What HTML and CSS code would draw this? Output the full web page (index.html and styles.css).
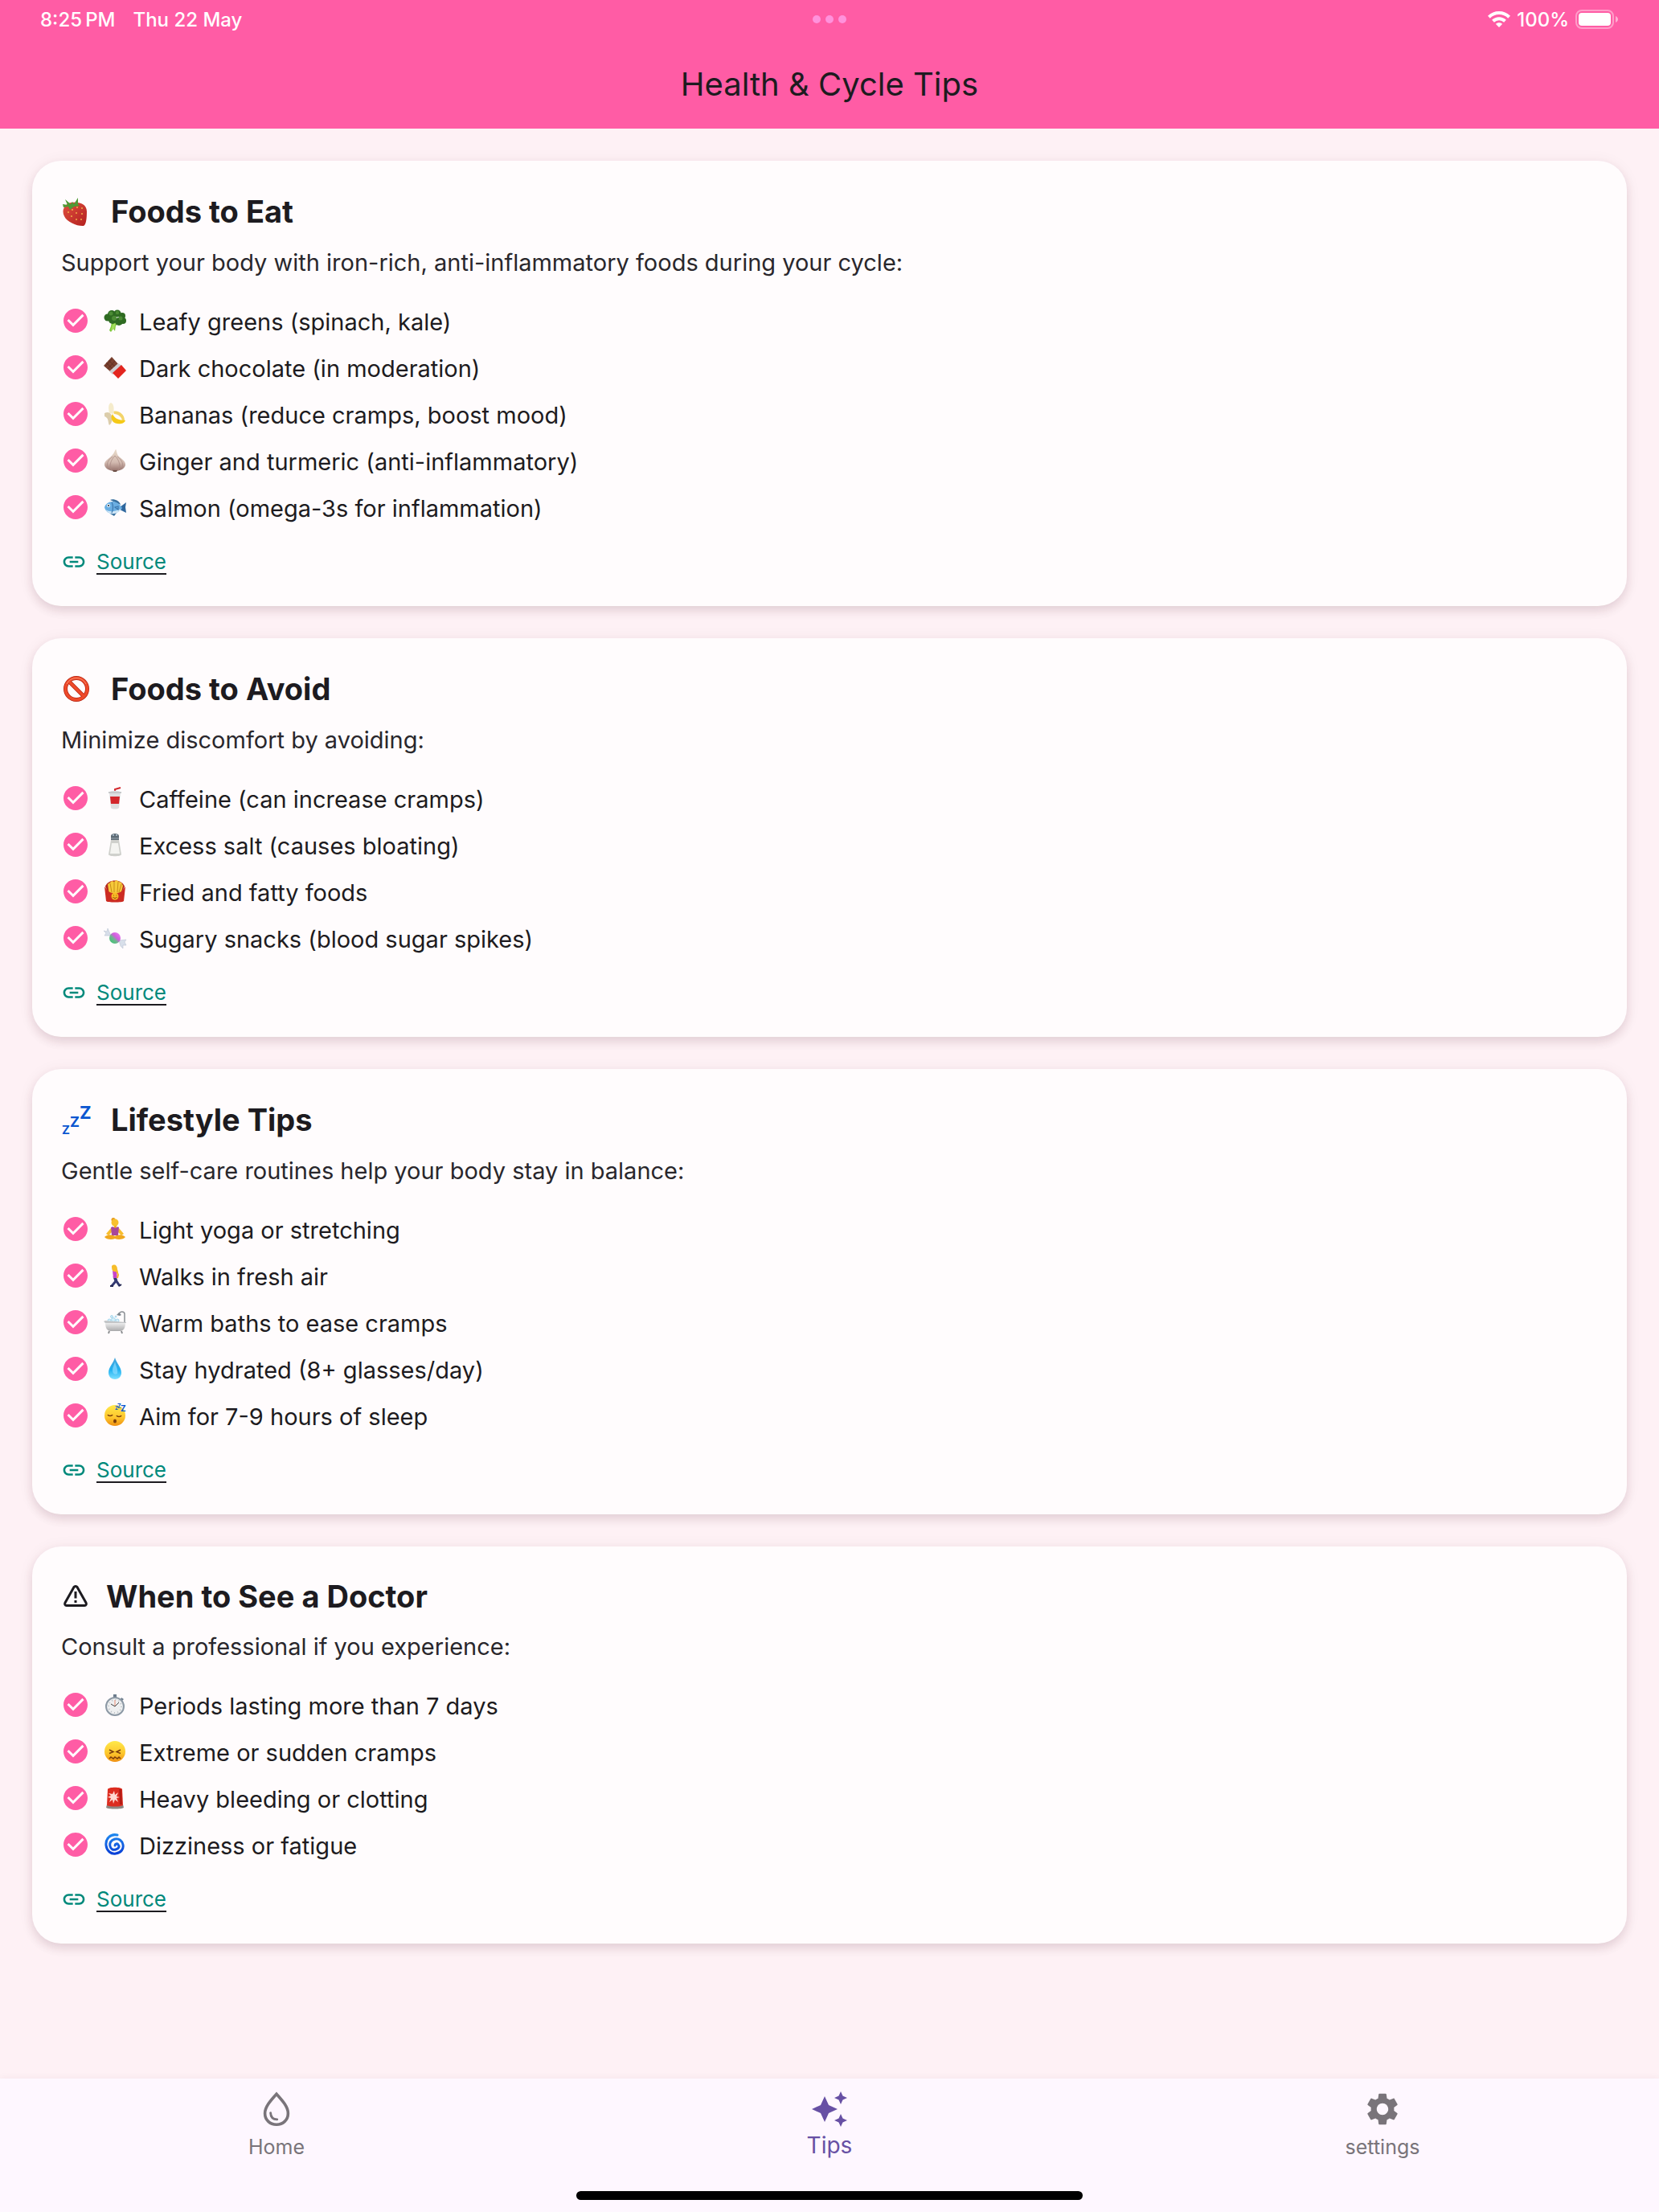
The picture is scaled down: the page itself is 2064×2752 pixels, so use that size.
FILE: index.html
```html
<!DOCTYPE html>
<html lang="en">
<head>
<meta charset="utf-8">
<meta name="viewport" content="width=device-width, initial-scale=1">
<title>Health &amp; Cycle Tips</title>
<link rel="stylesheet" href="styles.css">
</head>
<body>
<svg class="sprite" aria-hidden="true">
  <defs>
    <linearGradient id="drop-fill" x1="0" y1="0" x2="0" y2="1"><stop offset="0" stop-color="#4aa3d8"/><stop offset=".55" stop-color="#1fb0f0"/><stop offset="1" stop-color="#7fe0ff"/></linearGradient>
    <linearGradient id="face-fill" x1="0" y1="0" x2="0" y2="1"><stop offset="0" stop-color="#ffe94a"/><stop offset=".6" stop-color="#fdc52c"/><stop offset="1" stop-color="#ef8f12"/></linearGradient>
    <linearGradient id="garlic-fill" x1="0" y1="0" x2="0" y2="1"><stop offset="0" stop-color="#e9dccb"/><stop offset=".6" stop-color="#d3bab0"/><stop offset="1" stop-color="#94706a"/></linearGradient>
    <linearGradient id="berry-fill" x1="0" y1="0" x2="1" y2="1"><stop offset="0" stop-color="#e0503f"/><stop offset="1" stop-color="#b3201f"/></linearGradient>
    <linearGradient id="candy-fill" x1="0" y1="1" x2="1" y2="0"><stop offset="0" stop-color="#2fc96b"/><stop offset=".4" stop-color="#6fb58f"/><stop offset=".6" stop-color="#d45be0"/><stop offset="1" stop-color="#e98bef"/></linearGradient>
    <linearGradient id="swirl-fill" x1="0" y1="0" x2="0" y2="1"><stop offset="0" stop-color="#1e86ee"/><stop offset="1" stop-color="#0a3fd6"/></linearGradient>
    <linearGradient id="tub-fill" x1="0" y1="0" x2="0" y2="1"><stop offset="0" stop-color="#f3f3f3"/><stop offset="1" stop-color="#a9a9ab"/></linearGradient>
  </defs>
  <symbol id="check" viewBox="0 0 24 24"><path d="M12 2C6.480 2 2 6.480 2 12s4.480 10 10 10 10-4.480 10-10S17.520 2 12 2zm-2 15l-5-5 1.410-1.410L10 14.170l7.590-7.590L19 8l-9 9z"/></symbol>
  <symbol id="link" viewBox="0 0 24 24"><path d="M3.900 12c0-1.710 1.390-3.100 3.100-3.100h4V7H7c-2.760 0-5 2.240-5 5s2.240 5 5 5h4v-1.900H7c-1.710 0-3.100-1.390-3.100-3.100zM8 13h8v-2H8v2zm9-6h-4v1.900h4c1.710 0 3.100 1.390 3.100 3.100s-1.390 3.100-3.100 3.100h-4V17h4c2.760 0 5-2.240 5-5s-2.240-5-5-5z"/></symbol>
</svg>

<header class="app-bar">
  <div class="status">
    <div class="status-left"><span>8:25&#8201;PM</span><span>Thu 22 May</span></div>
    <div class="dots"><i></i><i></i><i></i></div>
    <div class="status-right">
      <svg class="wifi" viewBox="0 0 28 20" aria-hidden="true"><g fill="none" stroke="#fff" stroke-width="4"><path d="M1.400 7.200C8.500.3 19.500.3 26.600 7.200"/><path d="M6.500 12.300C10.800 8.200 17.200 8.200 21.500 12.300"/></g><path fill="#fff" d="M14 20l-4.200-4.200c2.300-2.100 6.100-2.100 8.400 0z"/></svg>
      <span>100%</span>
      <svg class="battery" viewBox="0 0 54 24" aria-hidden="true"><rect x="1" y="1" width="46" height="22" rx="7" fill="none" stroke="#fff" stroke-opacity=".4" stroke-width="2"/><rect x="4" y="4" width="40" height="16" rx="4" fill="#fff"/><path d="M50 8c4 1.500 4 6.500 0 8z" fill="#fff" fill-opacity=".5"/></svg>
    </div>
  </div>
  <h1>Health &amp; Cycle Tips</h1>
</header>

<main>
  <section class="card">
    <h2>
      <svg class="title-emoji" viewBox="0 0 38 38" aria-hidden="true"><path d="M4 13C7 7 13 6 19 7c7 0 13 4 13 11 0 9-1 17-4 18-7 1-21-5-24-12-2-4-2-8 0-11z" fill="url(#berry-fill)"/><path d="M2 9l6 1-3-7 7 6 2-3 2 3 5-8 0 8 2 2-7 1-5 4-2-4-6 1z" fill="#4f9a35"/><g fill="#f0b04a"><circle cx="9" cy="19" r="1"/><circle cx="14" cy="16" r="1"/><circle cx="20" cy="13" r="1"/><circle cx="26" cy="14" r="1"/><circle cx="13" cy="24" r="1"/><circle cx="19" cy="20" r="1"/><circle cx="26" cy="21" r="1"/><circle cx="19" cy="28" r="1"/><circle cx="25" cy="28" r="1"/></g></svg>
      <span>Foods to Eat</span>
    </h2>
    <p>Support your body with iron-rich, anti-inflammatory foods during your cycle:</p>
    <ul>
      <li><svg class="check"><use href="#check"/></svg><svg class="emoji" viewBox="0 0 30 30"><path d="M11 17l4-2 7 3-6 3-1 7-2-3-3 4-2-2 2-5z" fill="#7ec83a"/><path d="M12 20l4-3-2 8-4 2z" fill="#a4e05c"/><g fill="#2f6b22"><circle cx="6" cy="11" r="4.500"/><circle cx="11" cy="7" r="5"/><circle cx="18" cy="6" r="4.500"/><circle cx="24" cy="9" r="4"/><circle cx="25" cy="15" r="4"/><circle cx="20" cy="16" r="5"/><circle cx="12" cy="14" r="5"/></g><g fill="#4c8c35"><circle cx="10" cy="6" r="2.500"/><circle cx="18" cy="5" r="2.200"/><circle cx="14" cy="12" r="3"/><circle cx="22" cy="12" r="2.500"/></g></svg><span>Leafy greens (spinach, kale)</span></li>
      <li><svg class="check"><use href="#check"/></svg><svg class="emoji" viewBox="0 0 30 30"><path d="M11 2l9 10-10 9L1 13z" fill="#7b4130"/><path d="M7 6l9 9M4 9l9 9M6 17l9-10M3 14l8-9" stroke="#5a2d20" stroke-width=".8" fill="none"/><path d="M19 10l5 3-12 11-4-4z" fill="#cfcfd2"/><path d="M23 12l6 7-10 10-7-7z" fill="#e3251f"/></svg><span>Dark chocolate (in moderation)</span></li>
      <li><svg class="check"><use href="#check"/></svg><svg class="emoji" viewBox="0 0 30 30"><path d="M13 12c7-2 14 4 14 11l-3 1c0-5-5-9-10-9z" fill="#f3d469"/><path d="M8 14c-1-5-2-11 2-13 4 2 4 7 3 14z" fill="#f5ebcb"/><path d="M2 14c4-2 7-1 9 3 1 5 0 10-3 12-2-3 0-9-6-11z" fill="#dccdab"/><path d="M12 15c2 5 7 8 16 8-1 5-12 6-16 1-2-3-2-6 0-9z" fill="#f5c917"/></svg><span>Bananas (reduce cramps, boost mood)</span></li>
      <li><svg class="check"><use href="#check"/></svg><svg class="emoji" viewBox="0 0 30 30"><path d="M16 1c1 0 1 5 3 8 4 4 9 6 9 11 0 5-7 8-13 8S2 25 2 20c0-5 5-7 9-11 3-3 4-7 5-8z" fill="url(#garlic-fill)"/><path d="M15 9c-5 5-8 13-4 18M15 9c5 5 8 13 4 18M12 10C5 15 4 21 7 25M18 10c7 5 8 11 5 15" fill="none" stroke="#ab8d86" stroke-width=".8"/><path d="M12 27h6l-1 2h-4z" fill="#6d4f46"/></svg><span>Ginger and turmeric (anti-inflammatory)</span></li>
      <li><svg class="check"><use href="#check"/></svg><svg class="emoji" viewBox="0 0 30 30"><path d="M21 15l8-6-1 6 1 7-8-4z" fill="#2f679e"/><path d="M9 6c4-2 12 1 13 6zM9 23l5 3 3-4z" fill="#376f9e"/><path d="M2 15C4 8 16 3 24 16 17 26 4 25 2 15z" fill="#6aaee2"/><path d="M3 18c4 6 14 8 20-1-8 3-13 5-20 1z" fill="#cfe5f5"/><path d="M11 9c2 3 2 9 0 13M15 15l4-1v4z" fill="none" stroke="#3d78ae" stroke-width="1.200"/><circle cx="7" cy="13" r="2" fill="#fff"/><circle cx="7" cy="13" r="1" fill="#123"/></svg><span>Salmon (omega-3s for inflammation)</span></li>
    </ul>
    <div class="source"><svg><use href="#link"/></svg><a href="#eat">Source</a></div>
  </section>

  <section class="card">
    <h2>
      <svg class="title-emoji" viewBox="0 0 38 38" aria-hidden="true"><g fill="none" stroke="#b52312" stroke-width="5"><circle cx="19" cy="18" r="13.500"/><path d="M9.500 8.500l19 19"/></g><g fill="none" stroke="#ee4a2a" stroke-width="3.500"><circle cx="19" cy="18" r="13.500"/><path d="M9.500 8.500l19 19"/></g><path d="M7 12a13.500 13.500 0 0 1 24 0" fill="none" stroke="#f98a6a"/></svg>
      <span>Foods to Avoid</span>
    </h2>
    <p>Minimize discomfort by avoiding:</p>
    <ul>
      <li><svg class="check"><use href="#check"/></svg><svg class="emoji" viewBox="0 0 30 30"><path d="M15 8V4l7-2" fill="none" stroke="#d3262b" stroke-width="2"/><path d="M8 8c0-3 14-3 14 0l-2 19c-1 2-9 2-10 0z" fill="#dededf"/><path d="M9 13h12l-1 9H10z" fill="#d3262b"/><path d="M7 7h16v2H7z" fill="#c6c8ca"/></svg><span>Caffeine (can increase cramps)</span></li>
      <li><svg class="check"><use href="#check"/></svg><svg class="emoji" viewBox="0 0 30 30"><path d="M10 9h10l3 18c0 3-16 3-16 0z" fill="#cfd0cc"/><path d="M11 13h8l2 13H9z" fill="#f4f4f1"/><path d="M10 4c0-4 10-4 10 0v5H10z" fill="#5e6b75"/><path d="M10 7h10" stroke="#99a5ae"/><circle cx="13" cy="3" r="1" fill="#b9c8d8"/><circle cx="17" cy="3" r="1" fill="#b9c8d8"/></svg><span>Excess salt (causes bloating)</span></li>
      <li><svg class="check"><use href="#check"/></svg><svg class="emoji" viewBox="0 0 30 30"><path d="M3 9C6-1 24-1 27 9l-4 8H7z" fill="#b3261e"/><path d="M6 6l3-2 2-2 3 1 3-2 3 2 3 1 2 4-3 12H8z" fill="#f6c93a"/><path d="M9 5l2 11M14 3v13M19 3l-1 13M23 6l-3 10" stroke="#c98d1a" fill="none"/><path d="M2 9l5 6c4 3 12 3 16 0l5-6-2 18c-1 2-21 2-22 0z" fill="#cc2b22"/><circle cx="15" cy="21" r="4.500" fill="#f7b924"/><path d="M13 20h.8M16.500 20h.8M12.500 22c1 2 4 2 5 0" stroke="#8a3c10" fill="none"/></svg><span>Fried and fatty foods</span></li>
      <li><svg class="check"><use href="#check"/></svg><svg class="emoji" viewBox="0 0 30 30"><g fill="#d8dfea" stroke="#bcc5d4" stroke-width=".6"><path d="M10 12L6 3 5 7 1 6l3 3-2 3 4 0z"/><path d="M20 18l9-1-2 3 2 4-4 0 0 4-3-3z"/></g><circle cx="15" cy="15" r="7" fill="url(#candy-fill)"/></svg><span>Sugary snacks (blood sugar spikes)</span></li>
    </ul>
    <div class="source"><svg><use href="#link"/></svg><a href="#avoid">Source</a></div>
  </section>

  <section class="card">
    <h2>
      <svg class="title-emoji zzz" viewBox="0 0 38 38" aria-hidden="true"><text x="1" y="36" font-size="15">Z</text><text x="11" y="27" font-size="18">Z</text><text x="23" y="17" font-size="22">Z</text></svg>
      <span>Lifestyle Tips</span>
    </h2>
    <p>Gentle self-care routines help your body stay in balance:</p>
    <ul>
      <li><svg class="check"><use href="#check"/></svg><svg class="emoji" viewBox="0 0 30 30"><circle cx="13" cy="3.500" r="2.500" fill="#e79a1c"/><circle cx="15" cy="7" r="4.500" fill="#f8c12e"/><path d="M14 11h3v4h-3z" fill="#f0b020"/><path d="M10 14L4 21l3 2 5-5zM20 14l6 7-3 2-5-5z" fill="#f8bd2d"/><path d="M10 13l3-1c1 2 4 2 5 0l2 1-1 10h-8z" fill="#a8479a"/><path d="M2 25c4-4 9-3 13-1 4-2 9-3 13 1-2 3-9 4-13 2-4 2-11 1-13-2z" fill="#f0a81f"/></svg><span>Light yoga or stretching</span></li>
      <li><svg class="check"><use href="#check"/></svg><svg class="emoji" viewBox="0 0 30 30"><path d="M14 16l2 6-5 6M15 16l2 6 4 6" fill="none" stroke="#343a72" stroke-width="3"/><path d="M9 28h4M20 28l3-2" stroke="#252853" stroke-width="2"/><path d="M12 9l5 1 1 8h-5z" fill="#c745c9"/><path d="M17 9l2 5-1 4" fill="none" stroke="#f4b72b" stroke-width="2"/><path d="M11 3c3-3 7-1 7 4l1 4-4-1c-3 0-4-2-4-7z" fill="#f6bd2a"/></svg><span>Walks in fresh air</span></li>
      <li><svg class="check"><use href="#check"/></svg><svg class="emoji" viewBox="0 0 30 30"><path d="M27 15V5c0-4-6-4-7 0" fill="none" stroke="#8b9095" stroke-width="1.500"/><path d="M17 6l3-3 3 3-2 1z" fill="#7c858d"/><g fill="#d5effa" stroke="#8ecbe6" stroke-width=".7"><circle cx="8" cy="13" r="2"/><circle cx="13" cy="12" r="2.500"/><circle cx="18" cy="13" r="2"/><circle cx="11" cy="8" r="1.500"/><circle cx="16" cy="8" r="1"/></g><path d="M3 15h25c0 7-2 11-7 11H10c-5 0-7-4-7-11z" fill="url(#tub-fill)"/><path d="M1 14l2-1 26 2v1H3z" fill="#c3c5c7"/><path d="M8 26l-1 3M23 26l1 3" stroke="#8b8d90" stroke-width="2"/></svg><span>Warm baths to ease cramps</span></li>
      <li><svg class="check"><use href="#check"/></svg><svg class="emoji" viewBox="0 0 30 30"><path d="M15 1c2 7 8 12 8 19 0 5-4 8-8 8s-8-3-8-8C7 13 13 8 15 1z" fill="url(#drop-fill)"/><path d="M15 6c1 6 4 8 3 15-4 2-6-1-6-4 0-4 2-6 3-11z" fill="#8bdcff" opacity=".7"/></svg><span>Stay hydrated (8+ glasses/day)</span></li>
      <li><svg class="check"><use href="#check"/></svg><svg class="emoji zz" viewBox="0 0 30 30"><circle cx="15" cy="15" r="13" fill="url(#face-fill)"/><path d="M6 14c1 2 5 2 6 0M17 15c1 2 5 2 6 0" fill="none" stroke="#7b3d0b" stroke-width="1.500"/><ellipse cx="15" cy="22" rx="2" ry="2.500" fill="#7b3d0b"/><text x="15" y="8" font-size="6">Z</text><text x="18" y="6" font-size="7">Z</text><text x="22" y="10" font-size="10">Z</text></svg><span>Aim for 7-9 hours of sleep</span></li>
    </ul>
    <div class="source"><svg><use href="#link"/></svg><a href="#lifestyle">Source</a></div>
  </section>

  <section class="card">
    <h2 class="compact">
      <svg class="title-warn" viewBox="0 0 34 38" aria-hidden="true"><path d="M16 6.500c.9-1.200 3.100-1.200 4 0l11 19.500c.9 1.700 0 3.500-1.700 3.500H6.700C5 29.500 4.100 27.700 5 26z" fill="none" stroke="#1d1b20" stroke-width="3" stroke-linejoin="round"/><path d="M18 12v8.500M18 23v3" stroke="#1d1b20" stroke-width="3"/></svg>
      <span>When to See a Doctor</span>
    </h2>
    <p>Consult a professional if you experience:</p>
    <ul>
      <li><svg class="check"><use href="#check"/></svg><svg class="emoji" viewBox="0 0 30 30"><path d="M13 2h4v5h-4zM23 6l3 2-2 2-2-2z" fill="#6d7c8c"/><circle cx="15" cy="17" r="11" fill="#eeeff0" stroke="#8d99a5" stroke-width="2"/><circle cx="15" cy="17" r="8" fill="none" stroke="#b9bec4" stroke-dasharray="1 3.190" stroke-width="2"/><path d="M15 17V9" stroke="#e88a70"/><path d="M10 14l5 3 5-5" fill="none" stroke="#444" stroke-width="1"/></svg><span>Periods lasting more than 7 days</span></li>
      <li><svg class="check"><use href="#check"/></svg><svg class="emoji" viewBox="0 0 30 30"><circle cx="15" cy="15" r="13" fill="url(#face-fill)"/><path d="M8 13l5 2.500-5 2M22 13l-5 2.500 5 2M8 24l2-2 3 2 2-2 3 2 2-2 2 2" fill="none" stroke="#7b3d0b" stroke-width="1.500"/></svg><span>Extreme or sudden cramps</span></li>
      <li><svg class="check"><use href="#check"/></svg><svg class="emoji" viewBox="0 0 30 30"><path d="M5 23h20l1 4c-3 2-19 2-22 0z" fill="#8e8884"/><path d="M6 4c1-3 17-3 18 0l1 20c-4 2-16 2-20 0z" fill="#dd2c20"/><path d="M20 4h3l1 19h-3z" fill="#b51b14"/><path d="M14 6l1 5 4-3-2 5 4 1-4 1 2 5-4-3-2 5-1-5-4 3 2-5-4-1 4-2-3-3 5 1z" fill="#ffd9d2"/></svg><span>Heavy bleeding or clotting</span></li>
      <li><svg class="check"><use href="#check"/></svg><svg class="emoji" viewBox="0 0 30 30"><path d="M18 3C9 1 3 8 4 16c1 7 6 11 12 10 7-1 10-6 9-11-1-5-5-8-10-7-5 1-7 5-6 9 1 4 4 5 7 4 4-1 5-4 3-6-1-2-4-1-4 1" fill="none" stroke="url(#swirl-fill)" stroke-width="3" stroke-linecap="round"/></svg><span>Dizziness or fatigue</span></li>
    </ul>
    <div class="source"><svg><use href="#link"/></svg><a href="#doctor">Source</a></div>
  </section>
</main>

<nav class="tab-bar">
  <div class="tabs">
    <a href="#home"><svg viewBox="0 0 24 24" aria-hidden="true"><path d="M12 2.600C9 6 4.800 10.300 4.800 14.600c0 4.200 3.200 7 7.200 7s7.200-2.800 7.200-7C19.200 10.300 15 6 12 2.600z" fill="none" stroke="currentColor" stroke-width="1.800"/><path d="M8.300 14.300c.1 2.700 1.700 4.100 4.100 4.100" fill="none" stroke="currentColor" stroke-width="1.400" stroke-linecap="round"/></svg><span>Home</span></a>
    <a href="#tips" class="active" aria-current="page"><svg viewBox="0 0 24 24" aria-hidden="true"><path fill="currentColor" d="M19 9l1.250-2.750L23 5l-2.750-1.250L19 1l-1.250 2.750L15 5l2.750 1.250L19 9zm-7.500.5L9 4 6.500 9.500 1 12l5.500 2.500L9 20l2.500-5.500L17 12l-5.500-2.500zM19 15l-1.250 2.750L15 19l2.750 1.250L19 23l1.250-2.750L23 19l-2.750-1.250L19 15z"/></svg><span>Tips</span></a>
    <a href="#settings"><svg viewBox="0 0 24 24" aria-hidden="true"><path fill="currentColor" d="M19.140 12.940c.04-.3.060-.61.060-.94 0-.32-.02-.64-.07-.94l2.030-1.580c.18-.14.230-.41.120-.61l-1.920-3.320c-.12-.22-.37-.29-.59-.22l-2.390.96c-.5-.38-1.030-.7-1.620-.94l-.36-2.540c-.04-.24-.24-.41-.48-.41h-3.840c-.24 0-.43.17-.47.41l-.36 2.540c-.59.24-1.130.57-1.620.94l-2.390-.96c-.22-.08-.47 0-.59.22L2.740 8.870c-.12.210-.08.470.12.610l2.030 1.580c-.05.300-.09.630-.09.940s.02.640.07.940l-2.030 1.580c-.18.140-.23.410-.12.610l1.920 3.320c.12.220.37.290.59.220l2.390-.96c.5.380 1.030.700 1.620.940l.36 2.540c.05.240.24.410.48.410h3.840c.24 0 .44-.17.470-.41l.36-2.540c.59-.24 1.130-.56 1.620-.94l2.390.96c.22.080.47 0 .59-.22l1.920-3.320c.12-.22.070-.47-.12-.61l-2.010-1.580zM12 15.600c-1.980 0-3.600-1.620-3.600-3.600s1.620-3.600 3.600-3.600 3.600 1.620 3.600 3.600-1.620 3.600-3.600 3.600z"/></svg><span>settings</span></a>
  </div>
  <div class="home-indicator"></div>
</nav>
</body>
</html>
```

FILE: styles.css
```css
* { box-sizing: border-box; }

body {
  margin: 0;
  min-height: 100vh;
  display: flex;
  flex-direction: column;
  background: #fef1f5;
  color: #1d1b20;
  font-family: Inter, "Liberation Sans", sans-serif;
  font-size: 29px;
}

h1, h2, p, ul { margin: 0; padding: 0; }
svg { display: block; flex: none; overflow: visible; }
.sprite { position: absolute; width: 0; height: 0; }

.app-bar { background: #ff5ca5; }

.status {
  display: grid;
  grid-template-columns: 1fr auto 1fr;
  align-items: center;
  height: 48px;
  padding: 0 50px;
  color: #fff;
  font-size: 24px;
  font-weight: 500;
}
.status-left { display: flex; gap: 22px; }
.status-right { display: flex; justify-content: flex-end; align-items: center; gap: 8px; }
.dots { display: flex; gap: 6px; }
.dots i { width: 10px; height: 10px; border-radius: 50%; background: #ff92dc; }
.wifi { width: 28px; height: 20px; }
.battery { width: 54px; height: 24px; }

h1 {
  padding-top: 2px;
  line-height: 110px;
  font-size: 40px;
  font-weight: 400;
  text-align: center;
}

main {
  flex: 1;
  display: flex;
  flex-direction: column;
  gap: 40px;
  padding: 40px;
}

.card {
  padding: 36px;
  border-radius: 36px;
  background: #fffcfd;
  box-shadow: 0 6px 12px rgba(80, 30, 50, .12), 0 2px 20px rgba(80, 30, 50, .06);
}

h2 {
  display: flex;
  align-items: center;
  gap: 24px;
  line-height: 54px;
  font-size: 38px;
  font-weight: 700;
}
h2 span { padding-bottom: 2px; }
h2.compact { gap: 22px; line-height: 52px; }
.title-emoji { width: 38px; height: 38px; }
.title-warn { width: 34px; height: 38px; }
.zzz text, .zz text { font-weight: 700; fill: #0a56d0; }

p { margin-top: 16px; line-height: 38px; color: #29272c; }

ul { margin-top: 24px; list-style: none; }
li { display: flex; align-items: center; height: 58px; }
li span { padding-top: 2px; }
li .check { width: 36px; height: 36px; fill: #ff5ca5; }
li .emoji { width: 30px; height: 30px; margin: 0 15px 0 16px; }

.source {
  display: flex;
  align-items: center;
  gap: 12px;
  margin-top: 20px;
  font-size: 26px;
  line-height: 38px;
  fill: #00897b;
}
.source svg { width: 32px; height: 32px; }
.source a {
  color: #00897b;
  text-decoration: underline #1d1b20 2px;
  text-underline-offset: 5px;
}

.tab-bar { background: #fef7ff; box-shadow: 0 -2px 8px rgba(80, 30, 50, .04); }
.tabs { display: grid; grid-template-columns: repeat(3, 1fr); padding-top: 14px; }
.tabs a {
  display: flex;
  flex-direction: column;
  align-items: center;
  gap: 4px;
  color: #79747a;
  font-size: 25px;
  line-height: 38px;
  text-decoration: none;
}
.tabs .active { color: #6750a4; font-size: 28px; line-height: 34px; }
.tabs svg { width: 48px; height: 48px; }
.home-indicator {
  width: 630px;
  max-width: 60%;
  height: 11px;
  margin: 36px auto 15px;
  border-radius: 6px;
  background: #000;
}
```
